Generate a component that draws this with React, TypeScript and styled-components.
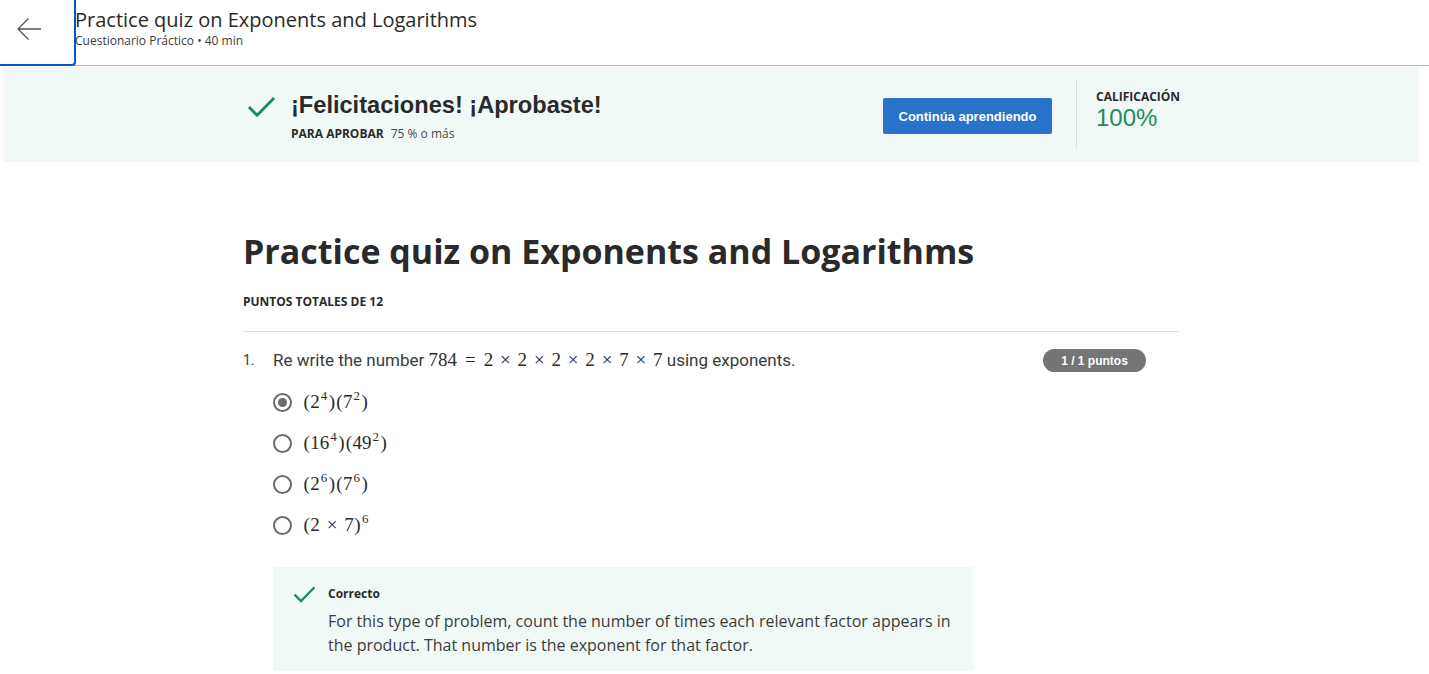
import React from "react";
import styled, { createGlobalStyle } from "styled-components";

const Global = createGlobalStyle`
  html, body { margin: 0; padding: 0; background: #fff; }
  body { font-family: "Open Sans", sans-serif; color: #373a3c; }
  * { box-sizing: border-box; }
`;

const Page = styled.div`
  width: 1429px;
  min-height: 674px;
  overflow: hidden;
`;

const Header = styled.header`
  display: flex;
  align-items: stretch;
  height: 66px;
  border-bottom: 1px solid #bdbdbd;
`;

const BackButton = styled.button`
  width: 76px;
  height: 66px;
  margin-bottom: -1px;
  border: none;
  border-right: 2px solid #0056d2;
  border-bottom: 2px solid #0056d2;
  border-bottom-right-radius: 4px;
  background: #fff;
  padding: 0 16px 6px 0;
  display: flex;
  align-items: center;
  justify-content: center;
  flex: none;
`;

const HeaderText = styled.div`
  display: flex;
  flex-direction: column;
  padding-top: 7px;
  margin-left: -1px;
`;

const HeaderTitle = styled.div`
  font-family: "Open Sans", sans-serif;
  font-size: 20px;
  line-height: 26px;
  color: #2a2a2a;
`;

const HeaderSub = styled.div`
  font-family: "Open Sans", sans-serif;
  font-size: 12px;
  line-height: 16px;
  color: #3c3c3c;
`;

const Banner = styled.section`
  margin: 1px 10px 0 3px;
  height: 95px;
  background: #f1f9f6;
  display: flex;
  align-items: flex-start;
  padding-left: 244px;
`;

const BannerMain = styled.div`
  display: flex;
  align-items: flex-start;
  gap: 15px;
  padding-top: 23px;
  width: 636px;
`;

const BannerTexts = styled.div`
  display: flex;
  flex-direction: column;
`;

const BannerTitle = styled.div`
  font-family: "Liberation Sans", Arial, sans-serif;
  font-weight: 700;
  font-size: 23.6px;
  line-height: 30px;
  color: #2a2a2a;
`;

const PassLine = styled.div`
  margin-top: 6px;
  font-size: 12px;
  line-height: 16px;
  color: #4a4a4a;
  display: flex;
  gap: 7px;
`;

const Strong = styled.span`
  font-weight: 700;
  color: #2a2a2a;
`;

const ContinueButton = styled.button`
  margin-top: 31px;
  width: 169px;
  height: 36px;
  background: #2a73cc;
  border: none;
  border-radius: 2px;
  color: #fff;
  font-family: "Liberation Sans", Arial, sans-serif;
  font-weight: 700;
  font-size: 13px;
  flex: none;
`;

const Divider = styled.div`
  width: 1px;
  height: 68px;
  margin: 13px 19px 0 24px;
  background: #d9dfdc;
`;

const Grade = styled.div`
  padding-top: 22px;
  display: flex;
  flex-direction: column;
`;

const GradeLabel = styled.div`
  font-weight: 700;
  font-size: 12px;
  line-height: 16px;
  color: #2a2a2a;
`;

const GradeValue = styled.div`
  font-family: "Liberation Sans", Arial, sans-serif;
  font-size: 24px;
  line-height: 26px;
  color: #1f8a5b;
`;

const Main = styled.main`
  padding-left: 243px;
  width: 1179px;
  box-sizing: content-box;
`;

const QuizTitle = styled.h1`
  margin: 68px 0 0 0;
  font-family: "Open Sans", sans-serif;
  font-weight: 700;
  font-size: 34px;
  line-height: 42px;
  color: #2a2a2a;
`;

const TotalPoints = styled.div`
  margin-top: 22px;
  font-weight: 700;
  font-size: 12px;
  line-height: 16px;
  color: #2a2a2a;
`;

const Rule = styled.hr`
  margin: 21px 0 0 0;
  border: none;
  border-top: 1px solid #e0e0e0;
  width: 936px;
`;

const QuestionRow = styled.div`
  display: flex;
  align-items: flex-start;
  margin-top: 16px;
  width: 903px;
`;

const QNum = styled.div`
  width: 30px;
  font-family: Roboto, sans-serif;
  font-size: 14px;
  line-height: 24px;
  color: #373a3c;
`;

const QBody = styled.div`
  flex: 1;
`;

const QText = styled.div`
  font-family: Roboto, sans-serif;
  font-size: 17px;
  line-height: 24px;
  color: #373a3c;
`;

const Math = styled.span`
  font-family: "Liberation Serif", "DejaVu Serif", serif;
  font-size: 19px;
  color: #2a2a2a;
`;

const Op = styled.span<{ $wide?: boolean }>`
  margin: 0 ${(p) => (p.$wide ? "0.42em" : "0.36em")};
`;

const Paren = styled.span`
  margin: 0 0.5px;
`;

const Sup = styled.sup`
  font-size: 13px;
  line-height: 0;
  vertical-align: 8px;
  margin-left: 1px;
  margin-right: 1px;
`;

const Badge = styled.span`
  flex: none;
  height: 23px;
  width: 103px;
  border-radius: 12px;
  background: #757575;
  color: #fff;
  font-family: "Liberation Sans", Arial, sans-serif;
  font-weight: 700;
  font-size: 12px;
  display: flex;
  align-items: center;
  justify-content: center;
  margin-top: 1px;
`;

const Options = styled.div`
  margin-top: 18px;
  display: flex;
  flex-direction: column;
  gap: 17px;
`;

const Option = styled.label`
  display: flex;
  align-items: center;
  gap: 11px;
  height: 24px;
`;

const Radio = styled.span<{ $checked?: boolean }>`
  width: 19px;
  height: 19px;
  border-radius: 50%;
  border: 2px solid #6b6b6b;
  display: flex;
  align-items: center;
  justify-content: center;
  flex: none;
  &::after {
    content: "";
    width: 9px;
    height: 9px;
    border-radius: 50%;
    background: ${(p) => (p.$checked ? "#6b6b6b" : "transparent")};
  }
`;

const Feedback = styled.div`
  margin-top: 30px;
  width: 700px;
  background: #f1f9f6;
  padding: 17px 20px 14px 20px;
  display: flex;
  gap: 12px;
`;

const FeedbackText = styled.div`
  display: flex;
  flex-direction: column;
`;

const FeedbackLabel = styled.div`
  font-weight: 700;
  font-size: 12px;
  line-height: 20px;
  color: #2a2a2a;
`;

const FeedbackBody = styled.div`
  margin-top: 5px;
  font-size: 16px;
  line-height: 24px;
  color: #3c3c3c;
`;

const Check = ({ size }: { size: number }) => (
  <svg width={size} height={size * 0.8} viewBox="0 0 30 24" fill="none">
    <path d="M2 12.5 L10.5 21 L28 3" stroke="#1f8a5b" strokeWidth="3" strokeLinecap="butt" strokeLinejoin="miter" />
  </svg>
);

const P = ({ children }: { children: React.ReactNode }) => <Paren>{children}</Paren>;

const options: React.ReactNode[] = [
  <><P>(</P>2<Sup>4</Sup><P>)</P><P>(</P>7<Sup>2</Sup><P>)</P></>,
  <><P>(</P>16<Sup>4</Sup><P>)</P><P>(</P>49<Sup>2</Sup><P>)</P></>,
  <><P>(</P>2<Sup>6</Sup><P>)</P><P>(</P>7<Sup>6</Sup><P>)</P></>,
  <><P>(</P>2<Op>×</Op>7<P>)</P><Sup>6</Sup></>,
];

export default function App() {
  return (
    <Page>
      <Global />
      <Header>
        <BackButton aria-label="Atrás">
          <svg width="26" height="24" viewBox="0 0 26 24" fill="none">
            <path d="M25 12 H2 M12.5 1.5 L2 12 L12.5 22.5" stroke="#555" strokeWidth="1.3" />
          </svg>
        </BackButton>
        <HeaderText>
          <HeaderTitle>Practice quiz on Exponents and Logarithms</HeaderTitle>
          <HeaderSub>Cuestionario Práctico • 40 min</HeaderSub>
        </HeaderText>
      </Header>
      <Banner>
        <BannerMain>
          <div style={{ paddingTop: 5 }}>
            <Check size={29} />
          </div>
          <BannerTexts>
            <BannerTitle>¡Felicitaciones! ¡Aprobaste!</BannerTitle>
            <PassLine>
              <Strong>PARA APROBAR</Strong>
              <span>75 % o más</span>
            </PassLine>
          </BannerTexts>
        </BannerMain>
        <ContinueButton>Continúa aprendiendo</ContinueButton>
        <Divider />
        <Grade>
          <GradeLabel>CALIFICACIÓN</GradeLabel>
          <GradeValue>100%</GradeValue>
        </Grade>
      </Banner>
      <Main>
        <QuizTitle>Practice quiz on Exponents and Logarithms</QuizTitle>
        <TotalPoints>PUNTOS TOTALES DE 12</TotalPoints>
        <Rule />
        <QuestionRow>
          <QNum>1.</QNum>
          <QBody>
            <QText>
              Re write the number{" "}
              <Math>
                784<Op $wide>=</Op>2<Op>×</Op>2<Op>×</Op>2<Op>×</Op>2<Op>×</Op>7<Op>×</Op>7
              </Math>{" "}
              using exponents.
            </QText>
            <Options>
              {options.map((o, i) => (
                <Option key={i}>
                  <Radio $checked={i === 0} />
                  <Math>{o}</Math>
                </Option>
              ))}
            </Options>
            <Feedback>
              <div style={{ paddingTop: 1 }}>
                <Check size={23} />
              </div>
              <FeedbackText>
                <FeedbackLabel>Correcto</FeedbackLabel>
                <FeedbackBody>
                  For this type of problem, count the number of times each relevant factor appears in the product. That number is the exponent for that factor.
                </FeedbackBody>
              </FeedbackText>
            </Feedback>
          </QBody>
          <Badge>1 / 1 puntos</Badge>
        </QuestionRow>
      </Main>
    </Page>
  );
}
